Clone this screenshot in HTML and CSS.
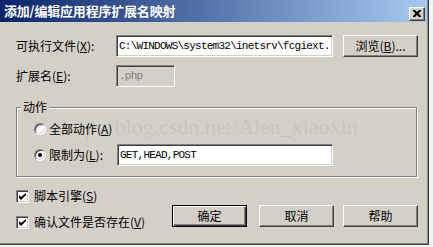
FILE: index.html
```html
<!DOCTYPE html>
<html>
<head>
<meta charset="utf-8">
<link rel="stylesheet" href="styles.css">
</head>
<body>
<div class="window">
  <div class="titlebar">
    <span class="title">添加/编辑应用程序扩展名映射</span>
    <span class="close"><svg width="8" height="7" viewBox="0 0 8 7"><path d="M0 0h2l2 2 2-2h2v1L5.5 3.5 8 6v1H6L4 5 2 7H0V6l2.5-2.5L0 1z" fill="#000"/></svg></span>
  </div>
  <div class="content">
    <div class="row row-exe">
      <span class="lbl">可执行文件(<u>X</u>):</span>
      <div class="field field-path">C:\WINDOWS\system32\inetsrv\fcgiext.</div>
      <span class="btn btn-browse">浏览(<u>B</u>)...</span>
    </div>
    <div class="row row-ext">
      <span class="lbl">扩展名(<u>E</u>):</span>
      <div class="field field-ext disabled">.php</div>
    </div>
    <fieldset class="group">
      <legend>动作</legend>
      <div class="opt">
        <span class="radio"></span>
        <span>全部动作(<u>A</u>)</span>
      </div>
      <div class="opt opt-limit">
        <span class="radio checked"></span>
        <span class="optlbl">限制为(<u>L</u>):</span>
        <div class="field field-verbs">GET,HEAD,POST</div>
      </div>
    </fieldset>
    <div class="bottom">
      <div class="checks">
        <div class="chk-row"><span class="chk"><svg width="7" height="7" viewBox="0 0 7 7"><path d="M0 2v3l2 2 5-5V0L2 4z" fill="#000"/></svg></span><span>脚本引擎(<u>S</u>)</span></div>
        <div class="chk-row"><span class="chk"><svg width="7" height="7" viewBox="0 0 7 7"><path d="M0 2v3l2 2 5-5V0L2 4z" fill="#000"/></svg></span><span>确认文件是否存在(<u>V</u>)</span></div>
      </div>
      <div class="buttons">
        <span class="btn btn-default">确定</span>
        <span class="btn btn-cancel">取消</span>
        <span class="btn">帮助</span>
      </div>
    </div>
  </div>
  <div class="watermark">http://blog.csdn.net/Alen_xiaoxin</div>
</div>
</body>
</html>
```

FILE: styles.css
```css
html, body {
  margin: 0;
  padding: 0;
  background: #f4f4f4;
}
body {
  font-family: "Noto Sans CJK SC", "Liberation Sans", sans-serif;
  font-size: 12px;
  line-height: 14px;
  color: #000;
}
u { text-decoration: underline; text-underline-offset: 1px; }

.window {
  position: relative;
  width: 428px;
  height: 244px;
  background: #d4d0c8;
  border-right: 1px solid #404040;
  border-bottom: 1px solid #404040;
  box-shadow: inset -1px -1px 0 #808080;
  overflow: hidden;
}
.titlebar {
  height: 22px;
  display: flex;
  align-items: center;
  justify-content: space-between;
  background: linear-gradient(to right, #0a246a, #a6caf0);
  padding: 0 2px 0 4px;
  margin-right: 1px;
}
.title {
  color: #fff;
  font-weight: bold;
  font-size: 13px;
  letter-spacing: -0.2px;
}
.close {
  width: 14px;
  height: 12px;
  display: flex;
  align-items: center;
  justify-content: center;
  background: #d4d0c8;
  border: 1px solid;
  border-color: #fff #404040 #404040 #fff;
  box-shadow: inset -1px -1px 0 #808080;
  margin-top: 5px;
}

.content {
  padding: 13px 10px 0 16px;
}
.row {
  display: flex;
  align-items: center;
  height: 22px;
}
.row-ext { margin-top: 8px; }
.lbl { width: 100px; flex: none; }

.field {
  box-sizing: border-box;
  height: 22px;
  border: 1px solid;
  border-color: #808080 #fff #fff #808080;
  box-shadow: inset 1px 1px 0 #404040, inset -1px -1px 0 #d4d0c8;
  background: #fff;
  font-family: "Liberation Mono", monospace;
  font-size: 11px;
  letter-spacing: -0.75px;
  line-height: 20px;
  padding: 0 0 0 2px;
  white-space: nowrap;
  overflow: hidden;
}
.field-path { width: 217px; }
.field-ext { width: 59px; }
.field.disabled { background: #d4d0c8; color: #808080; }
.field-verbs { width: 216px; margin-left: 4px; }

.btn {
  box-sizing: border-box;
  width: 75px;
  height: 22px;
  display: flex;
  align-items: center;
  justify-content: center;
  background: #d4d0c8;
  border: 1px solid;
  border-color: #fff #404040 #404040 #fff;
  box-shadow: inset -1px -1px 0 #808080;
  flex: none;
}
.btn-browse { margin-left: 10px; }
.btn-default {
  border-color: #000;
  box-shadow: inset 1px 1px 0 #fff, inset -1px -1px 0 #404040, inset -2px -2px 0 #808080;
}
.btn-cancel { margin-left: 12px; margin-right: 9px; }

.group {
  margin: 13px 1px 0 0;
  padding: 8px 0 10px 17px;
  border: 1px solid #808080;
  box-shadow: inset 1px 1px 0 #fff, 1px 1px 0 #fff;
  min-inline-size: 0;
}
.group legend {
  padding: 0 2px;
  margin-left: -13px;
  line-height: 14px;
  background: #d4d0c8;
}
.opt {
  display: flex;
  align-items: center;
  height: 14px;
}
.opt-limit {
  height: 22px;
  margin-top: 8px;
}
.optlbl { width: 64px; }
.radio {
  box-sizing: border-box;
  width: 12px;
  height: 12px;
  border-radius: 50%;
  border: 1px solid;
  border-color: #808080 #fff #fff #808080;
  box-shadow: inset 1px 1px 0 #404040, inset -1px -1px 0 #d4d0c8;
  background: #fff;
  margin-right: 3px;
  display: flex;
  align-items: center;
  justify-content: center;
  flex: none;
}
.radio.checked::after {
  content: "";
  width: 4px;
  height: 4px;
  border-radius: 50%;
  background: #000;
}

.bottom {
  display: flex;
  justify-content: space-between;
  margin-top: 12px;
}
.checks {
  display: flex;
  flex-direction: column;
  gap: 12px;
}
.chk-row {
  display: flex;
  align-items: center;
  height: 14px;
}
.chk {
  box-sizing: border-box;
  width: 13px;
  height: 13px;
  border: 1px solid;
  border-color: #808080 #fff #fff #808080;
  box-shadow: inset 1px 1px 0 #404040, inset -1px -1px 0 #d4d0c8;
  background: #fff;
  margin-right: 5px;
  display: flex;
  align-items: center;
  justify-content: center;
}
.buttons {
  display: flex;
  margin-top: 16px;
}

.watermark {
  position: absolute;
  left: 62px;
  top: 114px;
  font-family: "Liberation Serif", serif;
  font-size: 22px;
  line-height: 26px;
  color: rgba(0, 0, 0, 0.07);
  pointer-events: none;
  white-space: nowrap;
}
```
